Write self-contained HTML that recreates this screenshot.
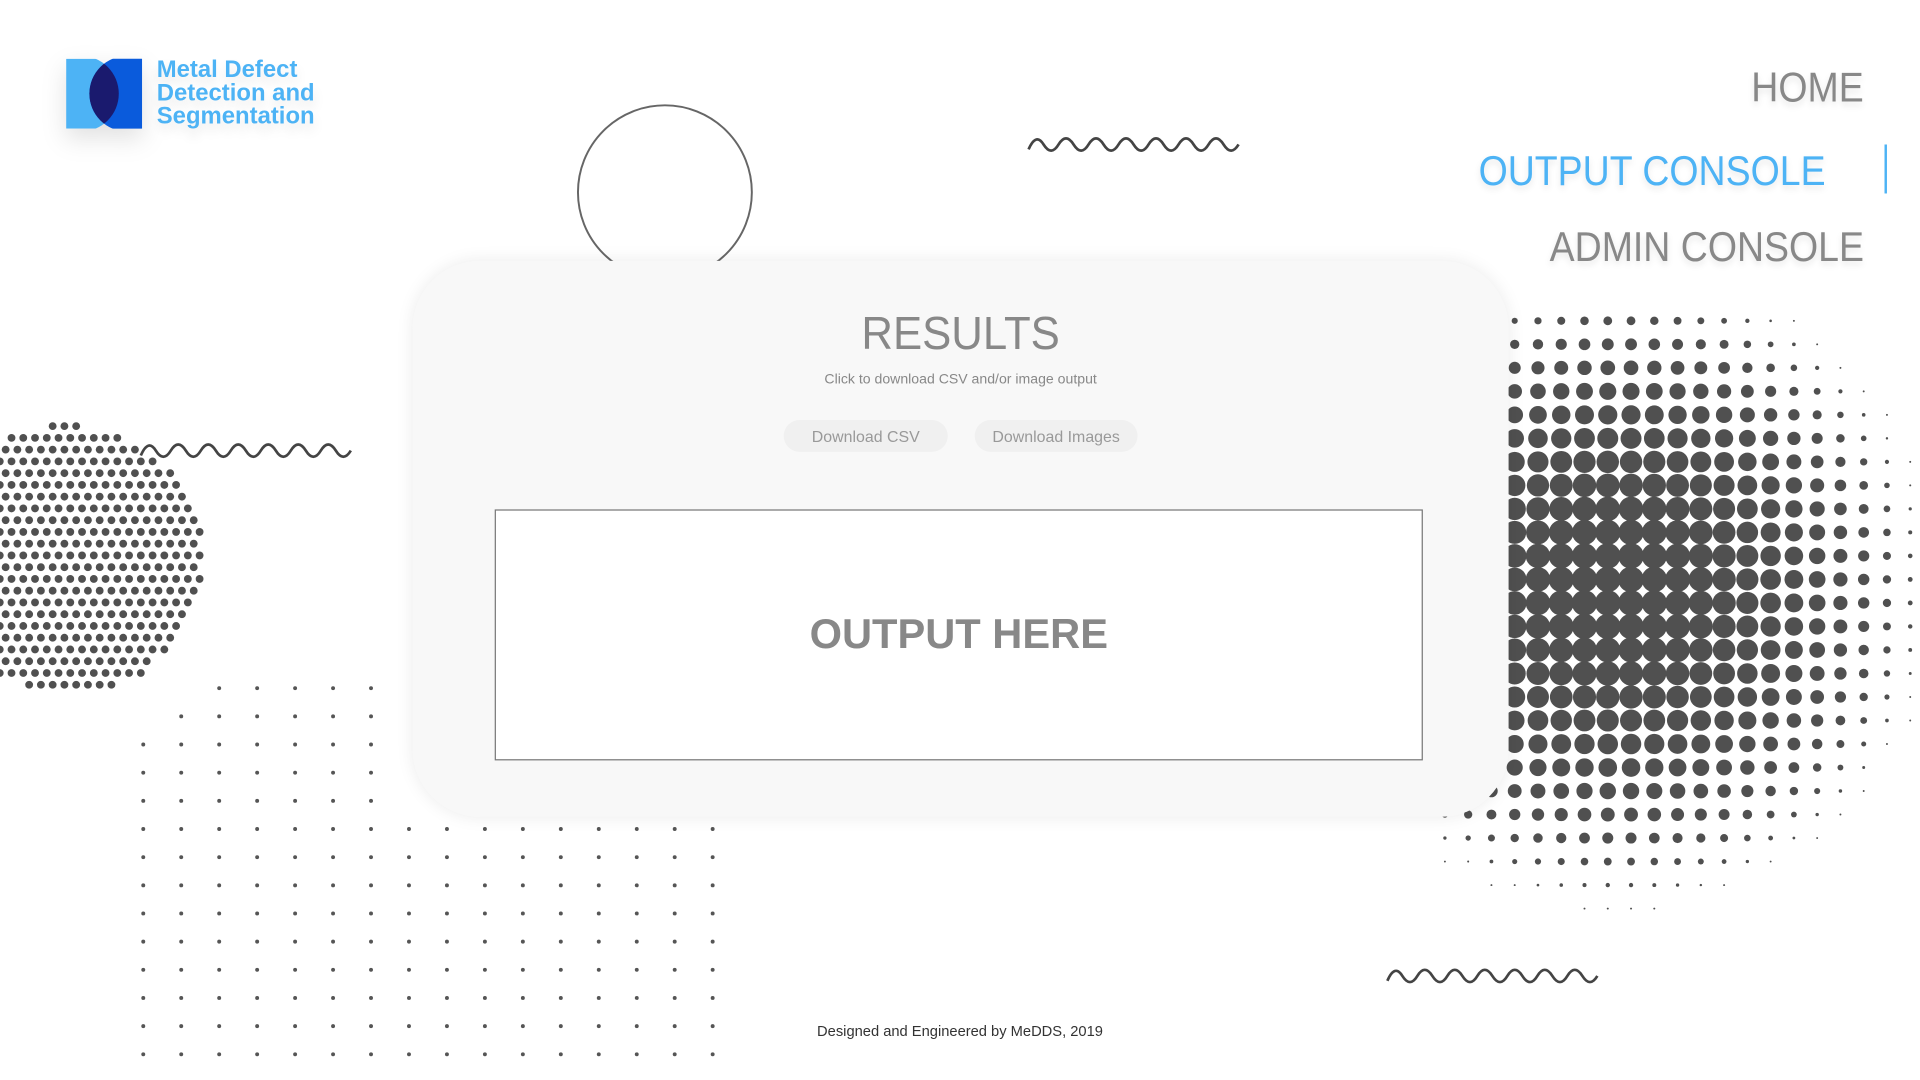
<!DOCTYPE html>
<html><head><meta charset="utf-8"><style>
html,body{margin:0;padding:0;width:1920px;height:1080px;overflow:hidden;background:#fff;}
#s{position:absolute;left:0;top:0;width:1568px;height:882px;transform:scale(1.2245);transform-origin:0 0;font-family:"Liberation Sans",sans-serif;}
.a{position:absolute;}
.nav{position:absolute;right:46px;font-size:34px;color:#888;white-space:nowrap;text-shadow:0 3px 6px rgba(0,0,0,.1);transform:scaleX(0.9);transform-origin:right center;}
</style></head><body><div id="s">
<svg class="a" style="left:0;top:0" width="1568" height="882" id="bg">
 <circle cx="543" cy="157" r="71" fill="none" stroke="#666" stroke-width="1.6"/>
 <g fill="none" stroke="#444" stroke-width="2.2" id="waves"></g>
</svg>
<div class="a" style="left:54px;top:48px;width:62px;height:57px;filter:drop-shadow(0 8px 10px rgba(0,0,0,.12))">
<svg width="62" height="57" viewBox="0 0 62 57">
 <defs><clipPath id="cl"><circle cx="12" cy="28.5" r="31"/></clipPath></defs>
 <rect x="0" y="0" width="62" height="57" fill="#4db3f5" clip-path="url(#cl)"/>
 <circle cx="50" cy="28.5" r="31" fill="#0a5bdc"/>
 <rect x="0" y="0" width="62" height="57" fill="none"/>
 <circle cx="50" cy="28.5" r="31" fill="#1a1a6e" clip-path="url(#cl)"/>
</svg></div>
<div class="a" style="left:128px;top:48px;font-size:19.5px;font-weight:bold;color:#4db3f5;line-height:19px;text-shadow:0 6px 10px rgba(0,0,0,.1)">Metal Defect<br>Detection and<br>Segmentation</div>
<div class="nav" style="top:53px">HOME</div>
<div class="nav" style="top:121px;right:77px;color:#4db3f5">OUTPUT CONSOLE</div>
<div class="a" style="left:1539px;top:118px;width:2px;height:40px;background:#4db3f5"></div>
<div class="nav" style="top:183px">ADMIN CONSOLE</div>
<div class="a" style="left:337px;top:213px;width:895px;height:454px;border-radius:55px;background:#f8f8f8;box-shadow:0 0 14px rgba(0,0,0,.08)">
 <div class="a" style="left:0;width:895px;top:39px;text-align:center;font-size:38px;color:#888;transform:scaleX(0.94)">RESULTS</div>
 <div class="a" style="left:0;width:895px;top:91px;text-align:center;font-size:11.5px;color:#888">Click to download CSV and/or image output</div>
 <div class="a" style="left:303px;top:130px;width:134px;height:26px;border-radius:13px;background:#f0f0f0;text-align:center;line-height:27px;font-size:13px;color:#999">Download CSV</div>
 <div class="a" style="left:459px;top:130px;width:133px;height:26px;border-radius:13px;background:#f0f0f0;text-align:center;line-height:27px;font-size:13px;color:#999">Download Images</div>
 <div class="a" style="left:67px;top:203px;width:756px;height:203px;border:1px solid #777;background:#fff;text-align:center;line-height:203px;font-size:34px;font-weight:bold;color:#888">OUTPUT HERE</div>
</div>
<div class="a" style="left:0;width:1568px;top:835px;text-align:center;font-size:12px;color:#333">Designed and Engineered by MeDDS, 2019</div>
</div>
<script>
var ns="http://www.w3.org/2000/svg",bg=document.getElementById('bg');
function c(g,x,y,r,f){var e=document.createElementNS(ns,'circle');e.setAttribute('cx',x);e.setAttribute('cy',y);e.setAttribute('r',r);e.setAttribute('fill',f||'#505050');g.appendChild(e);}
var g=document.createElementNS(ns,'g');bg.insertBefore(g,bg.firstChild);
for(var y=348;y<572;y+=9.6)for(var x=-5;x<175;x+=9.6){var xx=x+((Math.round((y-348)/9.6))%2?4.8:0);if(Math.hypot(xx-56,y-457)<110)c(g,xx,y,3.2);}
for(var y=562;y<882;y+=23)for(var x=117;x<585;x+=31){if(Math.hypot(x-350,y-830)<330&&!(x>330&&y<670))c(g,x,y,1.6,'#555');}
for(var y=262;y<745;y+=19.2)for(var x=1180;x<1568;x+=19){var d=Math.hypot((x-1320)/1.1,(y-480)/1.1);var r=10.5*(1-Math.pow(d/240,2.2));if(d>240)continue;if(r<0.8)r=0.8;c(g,x,y,Math.min(r,10.5));}
var w=document.getElementById('waves');
[[840,118],[115,368],[1133,797]].forEach(function(p){var d='M'+p[0]+' '+(p[1]+4);for(var i=0;i<7;i++){var x=p[0]+i*24.5;d+=' Q'+(x+6)+' '+(p[1]-10)+' '+(x+12.25)+' '+p[1]+' T'+(x+24.5)+' '+(p[1]);}var e=document.createElementNS(ns,'path');e.setAttribute('d',d);w.appendChild(e);});
</script>
</body></html>
